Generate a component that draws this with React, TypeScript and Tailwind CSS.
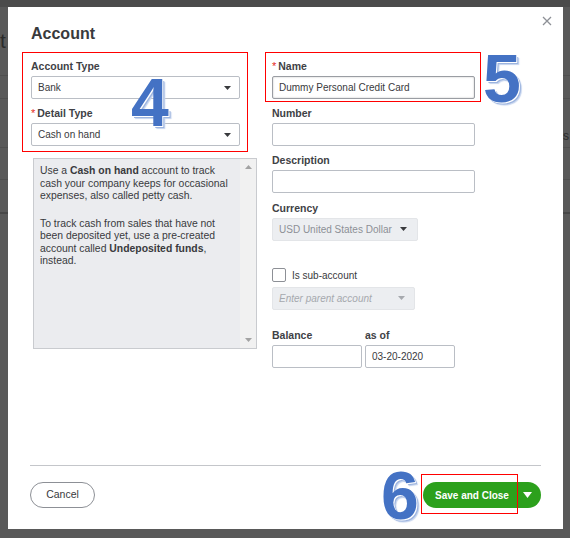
import React from 'react'

const font = "font-['Liberation_Sans',Arial,sans-serif]"

function Caret({ color = '#393a3d' }: { color?: string }) {
  return (
    <svg width="7" height="4" viewBox="0 0 7 4">
      <path d="M0 0h7L3.5 4z" fill={color} />
    </svg>
  )
}

function Label({ text, required }: { text: string; required?: boolean }) {
  return (
    <div className="mb-[3px] flex h-[14px] items-center text-[10.5px] font-bold leading-[14px] text-[#404145]">
      {required && <span className="mr-[2px] text-[11px] font-normal text-[#e4281b]">*</span>}
      {text}
    </div>
  )
}

function Select({ value, width }: { value: string; width: string }) {
  return (
    <div className={`flex h-[23px] ${width} items-center justify-between rounded-[2px] border border-[#babec5] bg-white pl-[6px] pr-[8px] text-[10px] text-[#393a3d]`}>
      <span>{value}</span>
      <Caret />
    </div>
  )
}

function Input({ value, width, focus }: { value?: string; width: string; focus?: boolean }) {
  return (
    <div
      className={`flex h-[23px] ${width} items-center rounded-[2px] border bg-white pl-[6px] text-[10px] text-[#393a3d] ${
        focus ? 'border-[#9a9da3] shadow-[inset_0_0_2px_rgba(0,0,0,0.25)]' : 'border-[#babec5]'
      }`}
    >
      {value}
    </div>
  )
}

function Num({ n, className }: { n: string; className: string }) {
  return (
    <div
      className={`absolute text-[68px] font-bold leading-none text-[#4472c4] [text-shadow:1px_1px_0_#ffffff,2px_2px_0_#9db4df,3px_3px_1px_#c5d4ee] ${className}`}
    >
      {n}
    </div>
  )
}

export default function App() {
  return (
    <div className={`relative h-[538px] w-[570px] overflow-hidden bg-[#595959] ${font}`}>
      {/* dimmed page behind the dialog */}
      <div className="h-[7px] bg-[#4b4b4b]" />
      <div className="flex h-[68px] items-center text-[21px] text-[#2b2b2b]">
        <span>t</span>
      </div>
      <div className="h-[23px] border-t border-[#4f4f4f]" />
      <div className="flex h-[49px] items-end justify-end border-t border-[#4f4f4f] pb-[2px] pr-[1px] text-[12px] text-[#2b2b2b]">
        <span>s</span>
      </div>
      <div className="h-[32px] border-t border-[#4f4f4f]" />
      <div className="h-[33px] border-t border-[#4f4f4f]" />
      <div className="h-[2px] bg-[#474747]" />

      {/* dialog */}
      <div className="absolute left-[8px] top-[7px] flex h-[522px] w-[555px] flex-col bg-white">
        <div className="flex items-start justify-between pl-[23px] pr-[11px]">
          <h1 className="pt-[17px] text-[16px] font-bold leading-[20px] text-[#393a3d]">Account</h1>
          <svg className="mt-[9px]" width="10" height="10" viewBox="0 0 10 10">
            <path d="M1 1l8 8M9 1l-8 8" stroke="#8d9096" strokeWidth="1.3" />
          </svg>
        </div>

        <div className="mt-[15px] grid grid-cols-[241px_1fr] pl-[23px]">
          {/* left column */}
          <div className="flex flex-col">
            <Label text="Account Type" />
            <Select value="Bank" width="w-[209px]" />
            <div className="h-[7px]" />
            <Label text="Detail Type" required />
            <Select value="Cash on hand" width="w-[209px]" />
            <div className="ml-[2px] mt-[12px] flex h-[191px] w-[224px] border border-[#c9cbcf] bg-[#ebecef]">
              <div className="flex-1 pl-[6px] pt-[6px] text-[10.4px] leading-[12.5px] text-[#393a3d]">
                <p>
                  Use a <b className="font-bold">Cash on hand</b> account to track
                  <br />
                  cash your company keeps for occasional
                  <br />
                  expenses, also called petty cash.
                </p>
                <p className="mt-[15px]">
                  To track cash from sales that have not
                  <br />
                  been deposited yet, use a pre-created
                  <br />
                  account called <b className="font-bold">Undeposited funds</b>,
                  <br />
                  instead.
                </p>
              </div>
              <div className="flex w-[16px] flex-col items-center justify-between bg-[#f1f1f1] py-[6px]">
                <svg width="7" height="4" viewBox="0 0 7 4">
                  <path d="M0 4h7L3.5 0z" fill="#a3a3a3" />
                </svg>
                <Caret color="#a3a3a3" />
              </div>
            </div>
          </div>

          {/* right column */}
          <div className="flex flex-col">
            <Label text="Name" required />
            <Input value="Dummy Personal Credit Card" width="w-[203px]" focus />
            <div className="h-[7px]" />
            <Label text="Number" />
            <Input width="w-[203px]" />
            <div className="h-[7px]" />
            <Label text="Description" />
            <Input width="w-[203px]" />
            <div className="h-[7.5px]" />
            <Label text="Currency" />
            <div className="flex h-[23px] w-[146px] items-center justify-between rounded-[2px] border border-[#e3e5e8] bg-[#eceef1] pl-[6px] pr-[10px] text-[10px] text-[#8d9096]">
              <span>USD United States Dollar</span>
              <Caret />
            </div>
            <div className="mt-[27.5px] flex h-[14px] items-center gap-[6px] text-[10px] text-[#393a3d]">
              <div className="h-[14px] w-[14px] rounded-[2px] border border-[#8d9096] bg-white" />
              <span>Is sub-account</span>
            </div>
            <div className="mt-[4.5px] flex h-[23px] w-[143px] items-center justify-between rounded-[2px] border border-[#e3e5e8] bg-[#eceef1] pl-[6px] pr-[9px] text-[10px] italic text-[#a6a9ae]">
              <span>Enter parent account</span>
              <Caret color="#a6a9ae" />
            </div>
            <div className="mt-[18px] flex text-[10.5px] font-bold text-[#404145]">
              <div className="h-[14px] w-[93px] leading-[14px]">Balance</div>
              <div className="h-[14px] leading-[14px]">as of</div>
            </div>
            <div className="mt-[3px] flex gap-[3px]">
              <Input width="w-[90px]" />
              <Input value="03-20-2020" width="w-[90px]" />
            </div>
          </div>
        </div>

        <div className="flex-1" />

        <div className="mx-[22px] flex items-center justify-between border-t border-[#c4c6ca] pb-[21px] pt-[16px]">
          <button className="h-[26px] w-[65px] rounded-full border border-[#8d9096] bg-white text-[10.5px] text-[#393a3d]">
            Cancel
          </button>
          <div className="flex h-[26px] w-[118px] items-center rounded-full bg-[#2ca01c] text-white">
            <span className="flex-1 pl-[12px] text-left text-[10px] font-bold">Save and Close</span>
            <span className="flex w-[25px] items-center justify-center pr-[3px]">
              <svg width="9" height="6" viewBox="0 0 9 6">
                <path d="M0 0h9L4.5 6z" fill="#ffffff" />
              </svg>
            </span>
          </div>
        </div>
      </div>

      {/* annotations */}
      <div className="absolute left-[22px] top-[52px] h-[100px] w-[226px] border border-[#f00]" />
      <div className="absolute left-[265px] top-[52px] h-[50px] w-[216px] border border-[#f00]" />
      <div className="absolute left-[421px] top-[474px] h-[40px] w-[97px] border border-[#f00]" />
      <Num n="4" className="left-[131px] top-[68px]" />
      <Num n="5" className="left-[483px] top-[44px]" />
      <Num n="6" className="left-[381px] top-[461px]" />
    </div>
  )
}
